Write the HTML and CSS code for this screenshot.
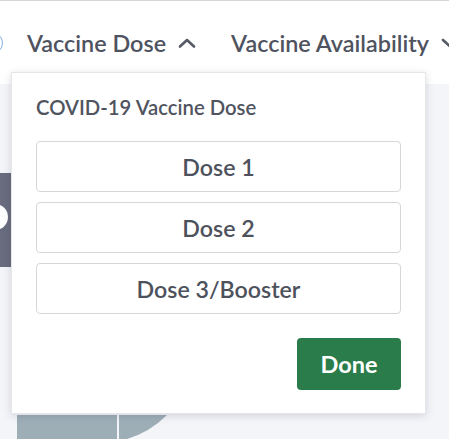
FILE: index.html
```html
<!DOCTYPE html>
<html lang="en">
<head>
<meta charset="utf-8">
<title>Vaccine Dose</title>
<link rel="stylesheet" href="styles.css">
</head>
<body>
<header class="topbar">
  <span class="info-dot"></span>
  <div class="filter">
    <span class="filter-label">Vaccine Dose</span>
    <svg class="chev" width="18" height="10" viewBox="0 0 18 10"><polyline points="2,8.5 9,2 16,8.5" fill="none" stroke="#555a65" stroke-width="2.6" stroke-linecap="round" stroke-linejoin="round"/></svg>
  </div>
  <div class="filter">
    <span class="filter-label">Vaccine Availability</span>
    <svg class="chev" width="18" height="10" viewBox="0 0 18 10"><polyline points="2,2 9,8.5 16,2" fill="none" stroke="#555a65" stroke-width="2.6" stroke-linecap="round" stroke-linejoin="round"/></svg>
  </div>
</header>
<main class="stage">
  <svg class="chart" width="449" height="355" viewBox="0 0 449 355">
    <rect x="0" y="89" width="11" height="94" fill="#686c7e"/>
    <circle cx="-5" cy="133" r="13" fill="#ffffff"/>
    <rect x="17" y="331" width="100" height="30" fill="#9eaeb7"/>
    <path d="M119 331 L167 331 A95 95 0 0 1 127 355 L119 355 Z" fill="#9eaeb7"/>
  </svg>
</main>
<section class="dropdown">
  <h2 class="dropdown-title">COVID-19 Vaccine Dose</h2>
  <div class="options">
    <button class="option">Dose 1</button>
    <button class="option">Dose 2</button>
    <button class="option">Dose 3/Booster</button>
  </div>
  <div class="actions">
    <button class="done">Done</button>
  </div>
</section>
</body>
</html>
```

FILE: styles.css
```css
* { box-sizing: border-box; }

html, body {
  margin: 0;
  padding: 0;
}

body {
  width: 449px;
  height: 439px;
  overflow: hidden;
  background: #f4f5f9;
  font-family: Lato, "Open Sans", "Liberation Sans", sans-serif;
  color: #4d515c;
  position: relative;
}

.topbar {
  height: 84px;
  background: #ffffff;
  border-top: 1px solid #d6d6d6;
  display: flex;
  align-items: center;
  white-space: nowrap;
  overflow: hidden;
}

.info-dot {
  flex: none;
  width: 22px;
  height: 22px;
  margin-left: -19px;
  margin-right: 24px;
  border: 1.6px solid #86aee8;
  border-radius: 50%;
}

.filter {
  flex: none;
  display: flex;
  align-items: center;
  gap: 12px;
  margin-right: 35px;
}

.filter-label {
  font-size: 23.4px;
  font-weight: 600;
  color: #4f5360;
  line-height: 26px;
}

.chev { display: block; flex: none; }

.stage {
  position: relative;
  height: 355px;
}

.chart {
  position: absolute;
  left: 0;
  top: 0;
}

.dropdown {
  position: absolute;
  left: 11px;
  top: 72px;
  width: 415px;
  height: 342px;
  background: #ffffff;
  border: 1px solid #e6e6e9;
  box-shadow: 0 2px 8px rgba(40, 45, 60, 0.16);
  padding: 22px 24px 0 24px;
}

.dropdown-title {
  margin: 0 0 22px 0;
  font-size: 20.3px;
  line-height: 24px;
  font-weight: 600;
  color: #50545f;
}

.options {
  display: flex;
  flex-direction: column;
  gap: 10px;
}

.option {
  height: 51px;
  width: 100%;
  background: #ffffff;
  border: 1px solid #d7d7da;
  border-radius: 4px;
  font-family: inherit;
  font-size: 23.2px;
  font-weight: 600;
  color: #4d515c;
  display: flex;
  align-items: center;
  justify-content: center;
  padding: 0;
}

.actions {
  display: flex;
  justify-content: flex-end;
  margin-top: 24px;
}

.done {
  width: 104px;
  height: 52px;
  background: #2a7d4b;
  border: none;
  border-radius: 4px;
  color: #ffffff;
  font-family: inherit;
  font-size: 23.5px;
  font-weight: 700;
  padding: 0;
}
```
